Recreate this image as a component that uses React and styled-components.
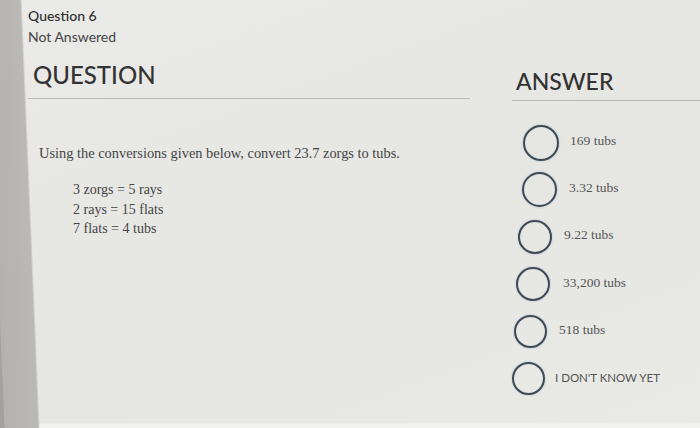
import React from 'react';
import styled, { createGlobalStyle } from 'styled-components';

const GlobalStyle = createGlobalStyle`
  html, body {
    margin: 0;
    padding: 0;
  }
  body {
    width: 700px;
    height: 428px;
    overflow: hidden;
    background: #e7e7e4;
  }
`;

const Page = styled.div`
  width: 700px;
  height: 428px;
  box-sizing: border-box;
  padding: 6px 0 0 28px;
  font-family: Lato, 'Open Sans', sans-serif;
  color: #333;
  background:
    linear-gradient(87.6deg, #a3a29f 0, #a3a29f 4px, #b3b2af 5px, #bab9b6 38px, rgba(0, 0, 0, 0) 40px) left top / 42px 100% no-repeat,
    linear-gradient(to bottom, rgba(0, 0, 0, 0) 423px, #f1f1ef 424px) left top / 100% 100% no-repeat,
    linear-gradient(160deg, #eaeae8 0%, #e6e6e3 50%, #e9e9e6 100%);
`;

const Meta = styled.div`
  display: flex;
  flex-direction: column;
  gap: 2px;
  font-size: 14px;
  line-height: 19px;
`;

const MetaTitle = styled.span`
  color: #2f2f2f;
  font-weight: 500;
`;

const MetaState = styled.span`
  color: #444;
`;

const Columns = styled.div`
  display: grid;
  grid-template-columns: 442px 1fr;
  column-gap: 42px;
`;

const Column = styled.div`
  display: flex;
  flex-direction: column;
`;

const Heading = styled.h2`
  margin: 0;
  padding: ${(p) => p.$top}px 0 ${(p) => p.$bottom}px ${(p) => p.$indent}px;
  font-size: ${(p) => p.$size}px;
  line-height: 30px;
  font-weight: 500;
  color: #333;
  border-bottom: 1px solid #b9b9b6;
`;

const Prompt = styled.p`
  margin: 45px 0 0 11px;
  font-family: 'Liberation Serif', serif;
  font-size: 14.4px;
  line-height: 18px;
  color: #444;
`;

const Conversions = styled.div`
  display: flex;
  flex-direction: column;
  margin: 18px 0 0 45px;
  font-family: 'Liberation Serif', serif;
  font-size: 14px;
  line-height: 19.5px;
  color: #444;
`;

const Choices = styled.div`
  display: flex;
  flex-direction: column;
  margin-top: 18px;
`;

const Choice = styled.label`
  display: flex;
  align-items: center;
  height: 47.2px;
  padding-left: ${(p) => p.$indent}px;
  gap: ${(p) => p.$gap}px;
`;

const Radio = styled.span`
  flex: none;
  box-sizing: border-box;
  width: ${(p) => p.$size}px;
  height: ${(p) => p.$size}px;
  border-radius: 50%;
  border: 2px solid #3e4a53;
  box-shadow: 0 0 2px rgba(110, 150, 190, 0.55), inset 0 0 1px rgba(110, 150, 190, 0.4);
`;

const ChoiceText = styled.span`
  font-family: ${(p) => (p.$caps ? "Lato, sans-serif" : "'Liberation Serif', serif")};
  font-size: ${(p) => (p.$caps ? 11.5 : 13.5)}px;
  color: #555;
  margin-top: -3px;
`;

const choices = [
  { text: '169 tubs', indent: 11, size: 36, gap: 11 },
  { text: '3.32 tubs', indent: 10, size: 35, gap: 12 },
  { text: '9.22 tubs', indent: 6, size: 34, gap: 12 },
  { text: '33,200 tubs', indent: 4, size: 34, gap: 13 },
  { text: '518 tubs', indent: 2, size: 33, gap: 12 },
  { text: "I DON'T KNOW YET", indent: 0, size: 33, gap: 10, caps: true },
];

export default function App() {
  return (
    <>
      <GlobalStyle />
      <Page>
        <Meta>
          <MetaTitle>Question 6</MetaTitle>
          <MetaState>Not Answered</MetaState>
        </Meta>
        <Columns>
          <Column>
            <Heading $top={14} $bottom={8} $indent={5} $size={24}>QUESTION</Heading>
            <Prompt>Using the conversions given below, convert 23.7 zorgs to tubs.</Prompt>
            <Conversions>
              <span>3 zorgs = 5 rays</span>
              <span>2 rays = 15 flats</span>
              <span>7 flats = 4 tubs</span>
            </Conversions>
          </Column>
          <Column>
            <Heading $top={20} $bottom={4} $indent={4} $size={23}>ANSWER</Heading>
            <Choices>
              {choices.map((c) => (
                <Choice key={c.text} $indent={c.indent} $gap={c.gap}>
                  <Radio $size={c.size} />
                  <ChoiceText $caps={c.caps}>{c.text}</ChoiceText>
                </Choice>
              ))}
            </Choices>
          </Column>
        </Columns>
      </Page>
    </>
  );
}
